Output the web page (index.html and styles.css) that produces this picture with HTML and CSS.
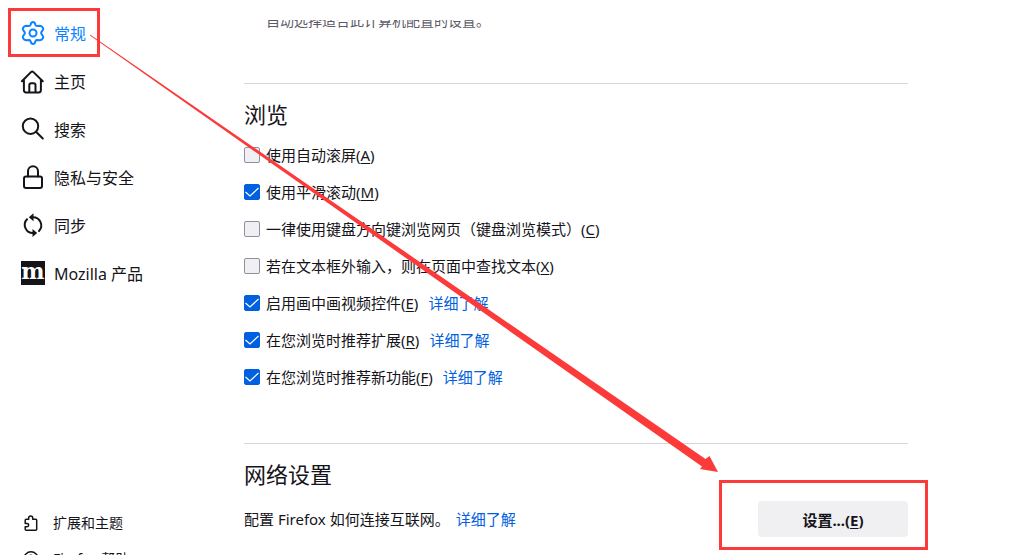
FILE: index.html
```html
<!DOCTYPE html>
<html lang="zh-CN">
<head>
<meta charset="utf-8">
<title>设置</title>
<link rel="stylesheet" href="styles.css">
</head>
<body>
<div class="page">
  <aside class="sidebar">
    <nav class="categories">
      <a class="category active" href="#general">
        <svg class="icon" viewBox="0 0 24 24"><path d="M10.3 1.800Q12 .4 13.700 1.800L14.600 4.200Q15 5.100 16 5.100L18.900 4.700Q21 4.800 21.900 6.800Q22.600 8.200 21.800 9.200L20.400 11.100Q19.800 12 20.400 12.900L21.800 14.800Q22.600 15.800 21.900 17.200Q21 19.200 18.900 19.300L16 18.900Q15 18.900 14.600 19.800L13.700 22.200Q12 23.600 10.300 22.200L9.400 19.800Q9 18.900 8 18.900L5.100 19.300Q3 19.200 2.100 17.200Q1.400 15.800 2.200 14.800L3.600 12.900Q4.200 12 3.600 11.100L2.200 9.200Q1.400 8.200 2.100 6.800Q3 4.800 5.100 4.700L8 5.100Q9 5.100 9.400 4.200Z"/><circle cx="12" cy="12" r="3.500"/></svg>
        <span>常规</span>
      </a>
      <a class="category" href="#home">
        <svg class="icon" viewBox="0 0 24 24"><path d="M.9 12.300 10.200 2.900Q11.200 2 12.200 2.900L21.800 12.300M2.900 11V21.300Q2.900 23.400 5 23.400H17.800Q19.900 23.400 19.900 21.300V11M8.300 23.300V16.300Q8.300 14.300 10.300 14.300H12.500Q14.500 14.300 14.500 16.300V23.300"/></svg>
        <span>主页</span>
      </a>
      <a class="category" href="#search">
        <svg class="icon" viewBox="0 0 24 24"><circle cx="9.500" cy="9.200" r="7.700"/><path d="M15 14.800 21.800 21.500"/></svg>
        <span>搜索</span>
      </a>
      <a class="category" href="#privacy">
        <svg class="icon" viewBox="0 0 24 24"><rect x="3" y="11.400" width="18" height="11.600" rx="2"/><path d="M7 11.400V6.300a5 5 0 0 1 10 0V11.400"/></svg>
        <span>隐私与安全</span>
      </a>
      <a class="category" href="#sync">
        <svg class="icon" viewBox="0 0 24 24"><path d="M11 4.200H12A8.200 8.200 0 0 1 18 18M13 20H12A8.200 8.200 0 0 1 6 6.200"/><path class="solid" d="M12.500 .2V8.200L7.800 4.200ZM11.500 16V24L16.200 20Z"/></svg>
        <span>同步</span>
      </a>
      <a class="category" href="#products">
        <svg class="icon" viewBox="0 0 24 24"><rect class="tile" width="24" height="24"/><text class="letter" x="12" y="18" text-anchor="middle">m</text></svg>
        <span>Mozilla 产品</span>
      </a>
    </nav>
    <div class="shortcuts">
      <a class="shortcut" href="#addons">
        <svg class="small-icon" viewBox="0 0 16 16"><path d="M2.200 6V5.200Q2.200 4.200 3.200 4.200H5.700V3a2 2 0 0 1 4 0V4.200H12.700Q13.700 4.200 13.700 5.200V14.200Q13.700 15.200 12.700 15.200H3.200Q2.200 15.200 2.200 14.200V11.800H4a1.700 1.700 0 0 0 0-3.400H2.200V6"/></svg>
        <span>扩展和主题</span>
      </a>
      <a class="shortcut" href="#help">
        <svg class="small-icon" viewBox="0 0 16 16"><circle cx="8" cy="8" r="7.200"/><path d="M5.800 6.500a2.200 2.200 0 1 1 3.200 2Q8 9 8 10M8 11.500V12.500"/></svg>
        <span>Firefox 帮助</span>
      </a>
    </div>
  </aside>

  <main class="content">
    <p class="hint">自动选择适合此计算机配置的设置。</p>

    <section class="group browsing">
      <h2>浏览</h2>
      <div class="row"><input type="checkbox" id="autoscroll"><label for="autoscroll">使用自动滚屏(<u>A</u>)</label></div>
      <div class="row"><input type="checkbox" id="smooth" checked><label for="smooth">使用平滑滚动(<u>M</u>)</label></div>
      <div class="row"><input type="checkbox" id="caret"><label for="caret">一律使用键盘方向键浏览网页<span class="paren" lang="zh-TW">（</span>键盘浏览模式<span class="paren" lang="zh-TW">）</span>(<u>C</u>)</label></div>
      <div class="row"><input type="checkbox" id="find"><label for="find">若在文本框外输入，则在页面中查找文本(<u>X</u>)</label></div>
      <div class="row"><input type="checkbox" id="pip" checked><label for="pip">启用画中画视频控件(<u>E</u>)</label><a class="more" href="#pip-info">详细了解</a></div>
      <div class="row"><input type="checkbox" id="extensions" checked><label for="extensions">在您浏览时推荐扩展(<u>R</u>)</label><a class="more" href="#extensions-info">详细了解</a></div>
      <div class="row"><input type="checkbox" id="features" checked><label for="features">在您浏览时推荐新功能(<u>F</u>)</label><a class="more" href="#features-info">详细了解</a></div>
    </section>

    <section class="group">
      <h2>网络设置</h2>
      <div class="network">
        <p>配置 Firefox 如何连接互联网。<a class="more" href="#network-info">详细了解</a></p>
        <button type="button" class="settings">设置...(<u>E</u>)</button>
      </div>
    </section>
  </main>
</div>

<svg class="annotation" width="1010" height="555" viewBox="0 0 1010 555" aria-hidden="true">
  <rect x="9.500" y="9.500" width="89" height="46"/>
  <rect x="720.500" y="481.500" width="206" height="67"/>
  <path d="M90 34.500 705.500 459 709.500 456 718 472 700 469 702 466.500 90 35.500Z"/>
</svg>
</body>
</html>
```
FILE: styles.css
```css
* {
  box-sizing: border-box;
}

body {
  margin: 0;
  overflow: hidden;
  background: #fff;
  color: #15141a;
  font-family: "Noto Sans", "Noto Sans CJK SC", sans-serif;
  font-size: 15px;
  line-height: 22px;
}

h2,
p {
  margin: 0;
}

a {
  color: inherit;
  text-decoration: none;
}

.page {
  display: flex;
  height: 100vh;
}

.sidebar {
  display: flex;
  flex: 0 0 244px;
  flex-direction: column;
  justify-content: space-between;
  padding: 10px 0 0 21px;
}

.category {
  display: flex;
  align-items: center;
  gap: 9px;
  height: 48px;
  font-size: 16px;
}

.active {
  color: #0a84ff;
}

.icon,
.small-icon {
  flex: none;
  overflow: visible;
  fill: none;
  stroke: currentColor;
  stroke-linecap: round;
  stroke-linejoin: round;
}

.icon {
  width: 24px;
  height: 24px;
  margin-bottom: 2px;
  stroke-width: 2;
}

.small-icon {
  width: 16px;
  height: 16px;
  stroke-width: 1.5;
}

.icon .solid {
  fill: currentColor;
  stroke: none;
}

.icon .tile {
  fill: #15141a;
  stroke: none;
}

.icon .letter {
  fill: #fff;
  stroke: none;
  font: bold 22px "DejaVu Serif", serif;
}

.shortcuts {
  margin-bottom: -22px;
}

.shortcut {
  display: flex;
  align-items: center;
  gap: 14px;
  height: 36px;
  padding-left: 2px;
  font-size: 14px;
}

.content {
  flex: 0 1 664px;
  margin-top: 20px;
  overflow: hidden;
}

.hint {
  margin: -10px 0 51px;
  padding-left: 22px;
  color: #5b5b66;
  font-size: 14px;
}

.group {
  padding-top: 14px;
  border-top: 1px solid #d7d7db;
}

.browsing {
  padding-bottom: 48px;
}

h2 {
  margin-bottom: 6px;
  font-size: 22px;
  font-weight: 400;
  line-height: 32px;
}

.row {
  display: flex;
  align-items: center;
  height: 37px;
}

.row input {
  flex: none;
  width: 16px;
  height: 16px;
  margin: 0 6px 0 0;
  appearance: none;
  border: 1px solid #8f8f9d;
  border-radius: 2px;
  background: #f0f0f4;
}

.row input:checked {
  border-color: #0060df;
  background: #0060df url("data:image/svg+xml,%3Csvg xmlns='http://www.w3.org/2000/svg' viewBox='0 0 14 14'%3E%3Cpath d='M.5 7 5 11 13.500 3' fill='none' stroke='white' stroke-width='1.200'/%3E%3C/svg%3E");
}

.paren {
  font-family: "Noto Sans CJK TC", sans-serif;
}

u {
  text-underline-offset: 2px;
}

.more {
  margin-left: 10px;
  color: #0060df;
}

.network {
  display: flex;
  align-items: center;
  justify-content: space-between;
  padding-top: 5px;
}

.network .more {
  margin-left: 6px;
}

.settings {
  width: 150px;
  height: 36px;
  border: 0;
  border-radius: 4px;
  background: #f0f0f2;
  color: #15141a;
  font: 700 15px "Noto Sans", "Noto Sans CJK SC", sans-serif;
}

.annotation {
  position: absolute;
  top: 0;
  left: 0;
  fill: #fc3a3a;
  pointer-events: none;
}

.annotation rect {
  fill: none;
  stroke: #fc3a3a;
  stroke-width: 3;
}
```
